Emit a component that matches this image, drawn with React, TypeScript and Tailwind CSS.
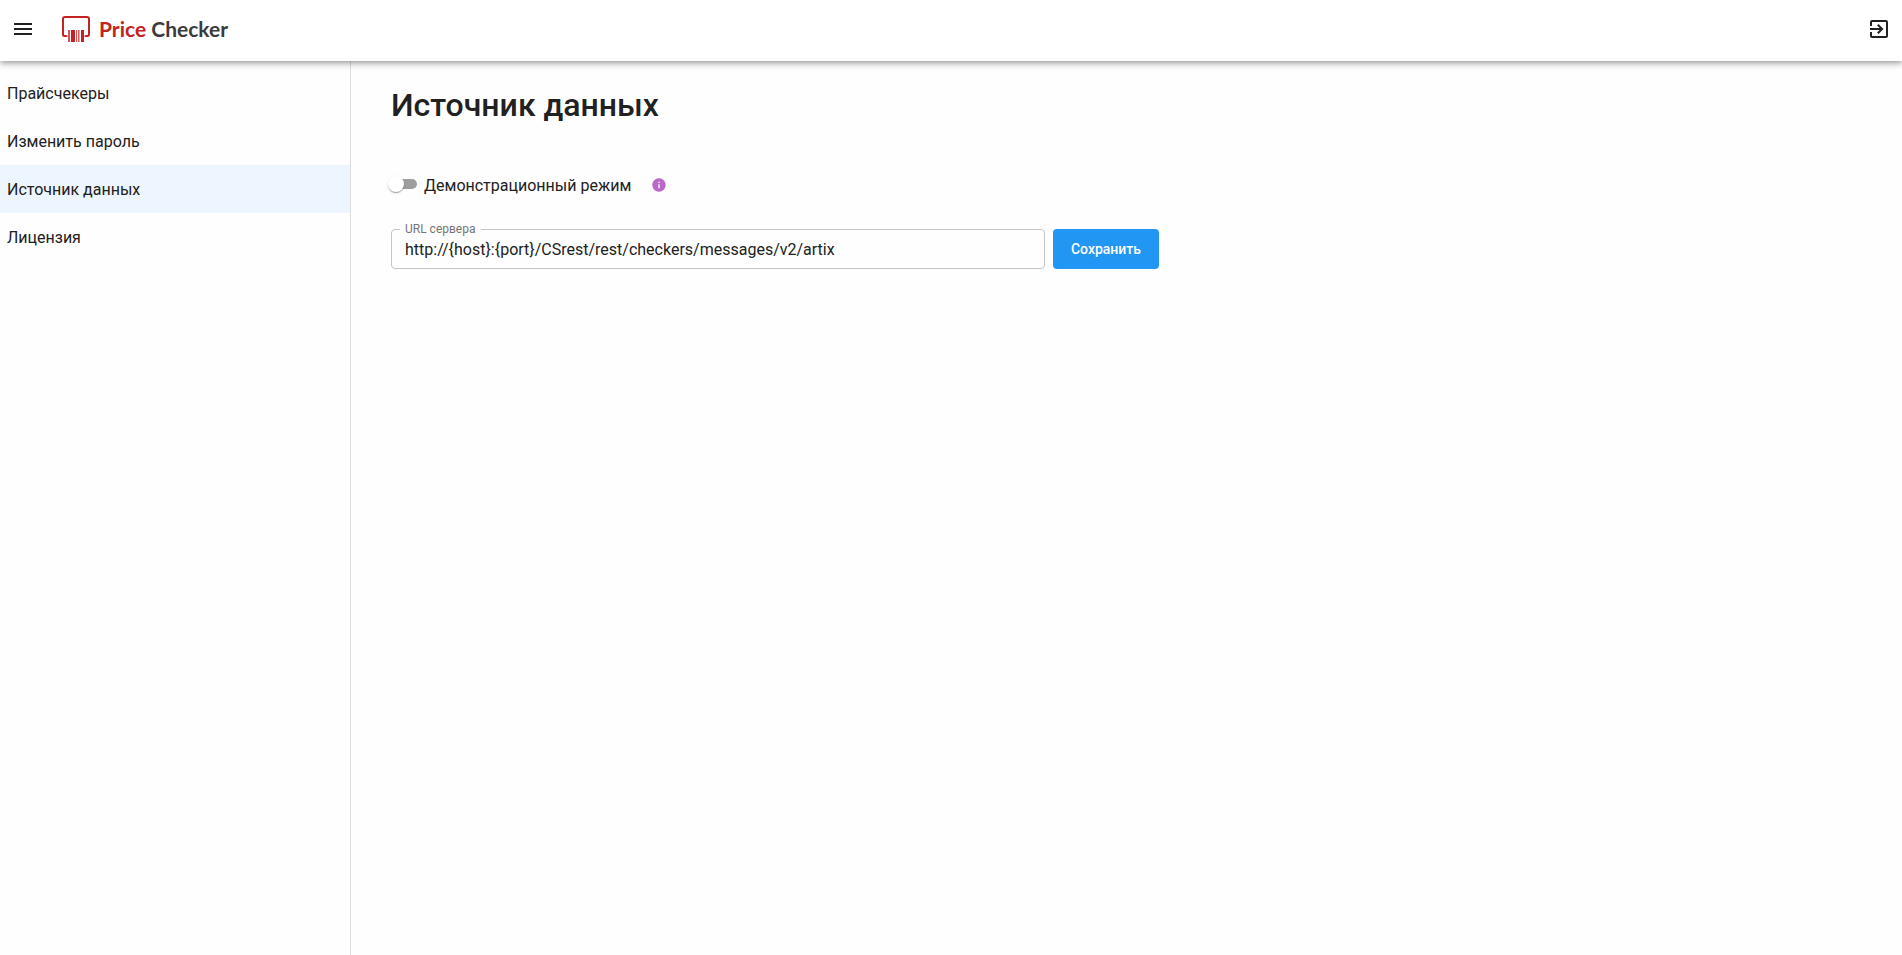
import { useState } from 'react';
import { MdExitToApp, MdInfo, MdMenu } from 'react-icons/md';

const menuItems = [
  { id: 'checkers', title: 'Прайсчекеры' },
  { id: 'password', title: 'Изменить пароль' },
  { id: 'source', title: 'Источник данных' },
  { id: 'license', title: 'Лицензия' },
];

function Logo() {
  return (
    <a href="#" className="flex items-center gap-2 font-[Lato,sans-serif] text-[21px] leading-7 font-bold text-[#3b3b3b]">
      <svg width="30" height="28" viewBox="0 0 30 28" fill="none" aria-hidden="true">
        <path
          d="M5.5 20.5V21H3.5A1.5 1.5 0 0 1 2 19.500V4a2 2 0 0 1 2-2h22a2 2 0 0 1 2 2v15.500a1.500 1.500 0 0 1-1.500 1.500h-2v-.5"
          stroke="#c32222"
          strokeWidth="2"
        />
        <path d="M10 15h4v12h-4zM20 15h3v12h-3z" fill="#c32222" />
        <path d="M7 15h2v12H7zM15 15h1v12h-1zM17 15h1.500v12H17z" fill="#d35656" />
      </svg>
      <span>
        <span className="text-[#c32222]">Price</span> Checker
      </span>
    </a>
  );
}

export default function App() {
  const [active, setActive] = useState('source');
  const [demo, setDemo] = useState(false);
  const [url, setUrl] = useState('http://{host}:{port}/CSrest/rest/checkers/messages/v2/artix');

  return (
    <div className="flex min-h-screen flex-col bg-[#fefefe] font-[Roboto,sans-serif] text-base text-[#212121]">
      <header className="z-10 flex h-[61px] items-center justify-between bg-white px-[11px] pb-[3px] shadow-[0_2px_4px_-1px_rgba(0,0,0,0.2),0_4px_5px_0_rgba(0,0,0,0.14),0_1px_10px_0_rgba(0,0,0,0.12)]">
        <div className="flex items-center gap-[26px]">
          <button type="button" aria-label="Меню">
            <MdMenu size={24} />
          </button>
          <Logo />
        </div>
        <button type="button" aria-label="Выход">
          <MdExitToApp size={24} />
        </button>
      </header>

      <div className="flex flex-1">
        <nav className="w-[351px] shrink-0 border-r border-[#dddddd] pt-2">
          {menuItems.map((item) => (
            <a
              key={item.id}
              href={`#${item.id}`}
              onClick={() => setActive(item.id)}
              className={`flex h-12 items-center px-[7px] pt-0.5 ${active === item.id ? 'bg-[#edf6fe]' : ''}`}
            >
              {item.title}
            </a>
          ))}
        </nav>

        <main className="flex-1 px-10 pt-6">
          <h1 className="text-[32px] leading-10 font-medium">Источник данных</h1>

          <div className="mt-[47px] flex items-start gap-5">
            <label className="flex items-start gap-[7px] leading-7">
              <span className="relative flex h-6 w-[26px] items-center">
                <input
                  type="checkbox"
                  role="switch"
                  checked={demo}
                  onChange={(e) => setDemo(e.target.checked)}
                  className="peer h-[10px] w-full appearance-none rounded-full bg-[#9e9e9e] checked:bg-[#90caf9]"
                />
                <span className="pointer-events-none absolute top-1 -left-[3px] size-4 rounded-full bg-white shadow-[0_2px_1px_-1px_rgba(0,0,0,0.2),0_1px_1px_0_rgba(0,0,0,0.14),0_1px_3px_0_rgba(0,0,0,0.12)] peer-checked:left-[13px] peer-checked:bg-[#2196f3]" />
              </span>
              Демонстрационный режим
            </label>
            <MdInfo size={16} className="mt-[5px] text-[#ba68c8]" />
          </div>

          <form className="mt-[29px] flex items-start gap-2" onSubmit={(e) => e.preventDefault()}>
            <div className="relative w-[654px]">
              <label htmlFor="url" className="absolute -top-2 left-[9px] bg-[#fefefe] px-[5px] text-xs text-[#757575]">
                URL сервера
              </label>
              <input
                id="url"
                type="text"
                value={url}
                onChange={(e) => setUrl(e.target.value)}
                className="h-10 w-full rounded border border-[#c4c4c4] px-[13px] outline-none focus:border-[#2196f3]"
              />
            </div>
            <button type="submit" className="h-10 w-[106px] rounded bg-[#2196f3] text-sm font-medium text-white">
              Сохранить
            </button>
          </form>
        </main>
      </div>
    </div>
  );
}
